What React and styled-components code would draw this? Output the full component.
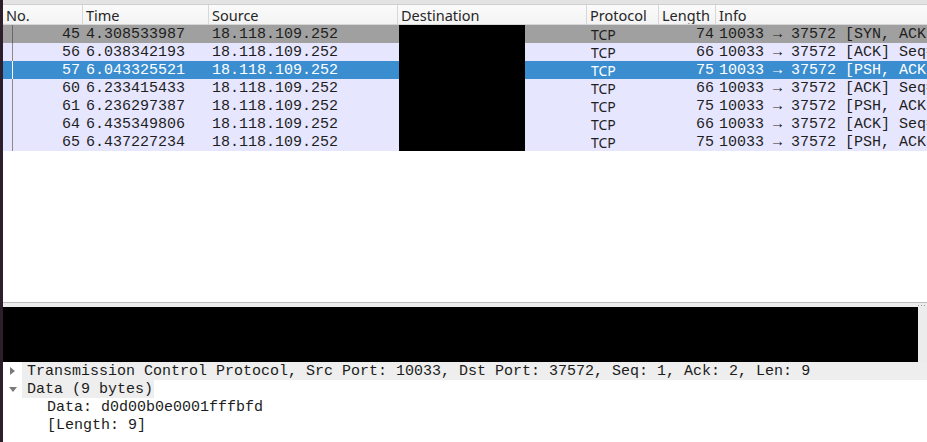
import React from 'react'
import styled, { createGlobalStyle } from 'styled-components';

const Global = createGlobalStyle`
    html, body { margin:0; padding:0; background:#fff; }
    #root { height:100vh; }
`;

const Window = styled.div`
    display:flex;
    height:100vh;
    overflow:hidden;
`;

const Strip = styled.div`
    width:3px;
    flex:none;
    background:#2c1f2b;
`;

const Main = styled.div`
    flex:1;
    min-width:0;
    display:flex;
    flex-direction:column;
`;

const TopBar = styled.div`
    height:4px;
    background:#e3e3e3;
    border-bottom:1px solid #cfcfcf;
`;

const PacketList = styled.div`
    flex:1;
    background:#fff;
    overflow:hidden;
`;

const Header = styled.div`
    display:grid;
    grid-template-columns: 80px 126px 189px 189px 72px 57px 1fr;
    height:19px;
    background:linear-gradient(#fbfbfb, #f3f3f3);
    border-bottom:1px solid #d6d6d6;
`;

const HeadCell = styled.div`
    border-right:1px solid #d8d8d8;
    padding-left:3px;
    padding-top:1px;
    font-family:"Noto Sans", sans-serif;
    font-size:14.5px;
    line-height:19px;
    color:#262626;
    white-space:nowrap;
    overflow:hidden;
    &:last-child { border-right:none; }
`;

const rowBg = { syn:'#a0a0a0', tcp:'#e7e6ff', sel:'#3a8dcf' };
const lineColor = { syn:'#6a6a6a', tcp:'#8a8a8a', sel:'#ffffff' };

const Row = styled.div`
    display:grid;
    grid-template-columns: 80px 126px 189px 189px 72px 57px 1fr;
    height:18px;
    overflow:hidden;
    background:${({kind}) => rowBg[kind]};
    color:${({kind}) => kind === 'sel' ? '#fff' : '#1e1e1e'};
    font-family:"Liberation Mono", monospace;
    font-size:15px;
    line-height:18px;
    white-space:nowrap;
`;

const NoCell = styled.div`
    text-align:right;
    padding-right:3px;
    padding-top:1px;
    background:linear-gradient(to right, transparent 9px, ${({kind}) => lineColor[kind]} 9px, ${({kind}) => lineColor[kind]} 10px, transparent 10px);
`;

const Cell = styled.div`
    padding-left:${({pad}) => pad ?? 3}px;
    padding-top:${({pad}) => pad === 0 ? 0 : 1}px;
    overflow:hidden;
    text-align:${({right}) => right ? 'right' : 'left'};
    padding-right:${({right}) => right ? 2 : 0}px;
`;

const SansCell = styled(Cell)`
    font-family:"Noto Sans", sans-serif;
    font-size:14px;
    line-height:17px;
`;

const Redact = styled.div`
    width:126px;
    height:18px;
    margin-left:1px;
    background:#000;
`;

const Splitter = styled.div`
    height:4px;
    border-top:1px solid #bdbdbd;
    background:#ececec;
    display:flex;
    justify-content:flex-end;
    align-items:center;
    gap:2px;
    padding-right:2px;
`;

const Dot = styled.span`
    width:1px;
    height:1px;
    background:#9a9a9a;
`;

const Detail = styled.div`
    height:135px;
    display:flex;
    flex-direction:column;
    background:#fff;
`;

const RedactRow = styled.div`
    height:55px;
    display:flex;
    background:#ececec;
`;

const RedactBox = styled.div`
    width:915px;
    background:#000;
`;

const TreeRow = styled.div`
    display:flex;
    height:18px;
    align-items:center;
    font-family:"Liberation Mono", monospace;
    font-size:15px;
    color:#1c1c1c;
    white-space:nowrap;
`;

const Arrow = styled.div`
    width:19px;
    flex:none;
    display:flex;
    justify-content:center;
    align-items:center;
    height:100%;
    background:#fff;
`;

const Label = styled.div`
    height:100%;
    line-height:20px;
    padding-left:${({indent}) => 5 + indent}px;
    padding-right:${({wide}) => wide ? 0 : 1}px;
    background:${({shade}) => shade ? '#eeeeee' : '#fff'};
    flex:${({wide}) => wide ? 1 : 'none'};
`;

const Collapsed = () => (
    <svg width="5" height="8" viewBox="0 0 5 8"><path d="M0 0 L5 4 L0 8 Z" fill="#7a7a7a"/></svg>
)

const Expanded = () => (
    <svg width="8" height="5" viewBox="0 0 8 5"><path d="M0 0 L8 0 L4 5 Z" fill="#7a7a7a"/></svg>
)

const columns = ['No.','Time','Source','Destination','Protocol','Length','Info']

const packets = [
    {no:45, time:'4.308533987', len:74, info:'10033 → 37572 [SYN, ACK] Seq=0 Ack=1 Win=65160 Len=0', kind:'syn'},
    {no:56, time:'6.038342193', len:66, info:'10033 → 37572 [ACK] Seq=1 Ack=2 Win=65280 Len=0', kind:'tcp'},
    {no:57, time:'6.043325521', len:75, info:'10033 → 37572 [PSH, ACK] Seq=1 Ack=2 Win=65280 Len=9', kind:'sel'},
    {no:60, time:'6.233415433', len:66, info:'10033 → 37572 [ACK] Seq=10 Ack=11 Win=65280 Len=0', kind:'tcp'},
    {no:61, time:'6.236297387', len:75, info:'10033 → 37572 [PSH, ACK] Seq=10 Ack=11 Win=65280 Len=9', kind:'tcp'},
    {no:64, time:'6.435349806', len:66, info:'10033 → 37572 [ACK] Seq=19 Ack=20 Win=65280 Len=0', kind:'tcp'},
    {no:65, time:'6.437227234', len:75, info:'10033 → 37572 [PSH, ACK] Seq=19 Ack=20 Win=65280 Len=9', kind:'tcp'},
]

const App = () => {
  return (
    <Window>
        <Global/>
        <Strip/>
        <Main>
            <TopBar/>
            <PacketList>
                <Header>
                    {columns.map((c) => <HeadCell key={c}>{c}</HeadCell>)}
                </Header>
                {packets.map((p) => (
                    <Row key={p.no} kind={p.kind}>
                        <NoCell kind={p.kind}>{p.no}</NoCell>
                        <Cell>{p.time}</Cell>
                        <Cell>18.118.109.252</Cell>
                        <Cell pad={0}><Redact/></Cell>
                        <SansCell pad={4}>TCP</SansCell>
                        <Cell right>{p.len}</Cell>
                        <Cell>{p.info}</Cell>
                    </Row>
                ))}
            </PacketList>
            <Splitter><Dot/><Dot/><Dot/></Splitter>
            <Detail>
                <RedactRow><RedactBox/></RedactRow>
                <TreeRow>
                    <Arrow><Collapsed/></Arrow>
                    <Label indent={0} shade wide>Transmission Control Protocol, Src Port: 10033, Dst Port: 37572, Seq: 1, Ack: 2, Len: 9</Label>
                </TreeRow>
                <TreeRow>
                    <Arrow><Expanded/></Arrow>
                    <Label indent={0} shade>Data (9 bytes)</Label>
                </TreeRow>
                <TreeRow>
                    <Arrow/>
                    <Label indent={20}>Data: d0d00b0e0001fffbfd</Label>
                </TreeRow>
                <TreeRow>
                    <Arrow/>
                    <Label indent={20}>[Length: 9]</Label>
                </TreeRow>
            </Detail>
        </Main>
    </Window>
  )
}

export default App
